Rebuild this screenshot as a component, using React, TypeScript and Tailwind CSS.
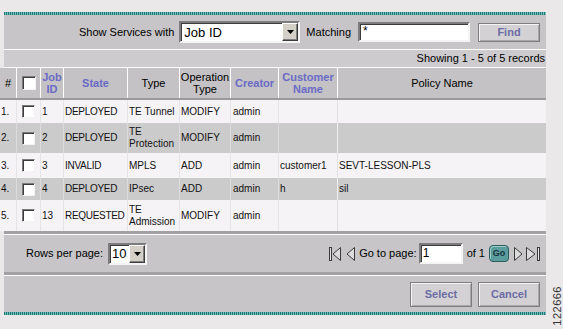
import React from "react";

type Row = {
  n: string;
  id: string;
  state: string;
  type: string[];
  op: string;
  creator: string;
  cust: string;
  policy: string;
  h: string;
  gray: boolean;
};

const rows: Row[] = [
  { n: "1.", id: "1", state: "DEPLOYED", type: ["TE Tunnel"], op: "MODIFY", creator: "admin", cust: "", policy: "", h: "h-[23px]", gray: false },
  { n: "2.", id: "2", state: "DEPLOYED", type: ["TE", "Protection"], op: "MODIFY", creator: "admin", cust: "", policy: "", h: "h-[30px]", gray: true },
  { n: "3.", id: "3", state: "INVALID", type: ["MPLS"], op: "ADD", creator: "admin", cust: "customer1", policy: "SEVT-LESSON-PLS", h: "h-[25px]", gray: false },
  { n: "4.", id: "4", state: "DEPLOYED", type: ["IPsec"], op: "ADD", creator: "admin", cust: "h", policy: "sil", h: "h-[22px]", gray: true },
  { n: "5.", id: "13", state: "REQUESTED", type: ["TE", "Admission"], op: "MODIFY", creator: "admin", cust: "", policy: "", h: "h-[31px]", gray: false },
];

const cols = "grid grid-cols-[16px_24px_23px_64px_52px_51px_48px_59px_209px]";

function Teal() {
  return <div className="h-[3px] w-full bg-[repeating-linear-gradient(90deg,#1b7a76_0px,#1b7a76_1px,#74bcb6_1px,#74bcb6_2px)]" />;
}

function Checkbox({ size = "w-[13px] h-[13px]" }: { size?: string }) {
  return (
    <div
      className={`${size} bg-white border border-t-[#7c7c7c] border-l-[#7c7c7c] border-b-[#f2f2f2] border-r-[#f2f2f2] shadow-[inset_1px_1px_0_#3c3c3c]`}
    />
  );
}

function DropArrow() {
  return (
    <div className="w-[16px] h-full bg-[#d4d0c8] border border-t-white border-l-white border-b-[#3c3c3c] border-r-[#3c3c3c] shadow-[inset_-1px_-1px_0_#808080] flex items-center justify-center">
      <svg width="7" height="4" viewBox="0 0 7 4">
        <polygon points="0,0 7,0 3.5,4" fill="#000" />
      </svg>
    </div>
  );
}

function Sunken({ className, children }: { className: string; children?: React.ReactNode }) {
  return (
    <div
      className={`${className} bg-white border-2 border-t-[#7c7c7c] border-l-[#7c7c7c] border-b-[#f4f4f4] border-r-[#f4f4f4] shadow-[inset_1px_1px_0_#3c3c3c]`}
    >
      {children}
    </div>
  );
}

function GrayButton({ label, className }: { label: string; className: string }) {
  return (
    <button
      className={`${className} bg-[#d3d1d3] border border-[#7e7e7e] shadow-[inset_1px_1px_0_#f4f4f4,inset_-1px_-1px_0_#a8a8a8] font-bold text-[11px] text-[#6c6ca6]`}
    >
      {label}
    </button>
  );
}

function FirstIcon() {
  return (
    <svg width="12" height="16" viewBox="0 0 12 16">
      <rect x="0.5" y="1.5" width="2" height="13" fill="#e6e6e6" stroke="#3a3a3a" />
      <polygon points="11.5,1.5 4,8 11.5,14.5" fill="#dcdcdc" stroke="#3a3a3a" />
    </svg>
  );
}

function PrevIcon() {
  return (
    <svg width="9" height="16" viewBox="0 0 9 16">
      <polygon points="8.5,1.5 1,8 8.5,14.5" fill="#dcdcdc" stroke="#3a3a3a" />
    </svg>
  );
}

function NextIcon() {
  return (
    <svg width="9" height="16" viewBox="0 0 9 16">
      <polygon points="0.5,1.5 8,8 0.5,14.5" fill="#dcdcdc" stroke="#3a3a3a" />
    </svg>
  );
}

function LastIcon() {
  return (
    <svg width="15" height="16" viewBox="0 0 15 16">
      <polygon points="0.5,1.5 9,8 0.5,14.5" fill="#dcdcdc" stroke="#3a3a3a" />
      <rect x="11.5" y="1.5" width="2" height="13" fill="#e6e6e6" stroke="#3a3a3a" />
    </svg>
  );
}

function HeadCell({ children, blue, first }: { children: React.ReactNode; blue?: boolean; first?: boolean }) {
  return (
    <div
      className={`flex items-center justify-center text-center leading-[12px] ${first ? "" : "border-l border-white"} ${
        blue ? "font-bold text-[#6a6ac6]" : "text-black"
      }`}
    >
      {children}
    </div>
  );
}

export default function App() {
  return (
    <div className="w-[563px] h-[329px] bg-[#ebe8ea] pt-[12px] flex overflow-hidden font-['Liberation_Sans',Arial,sans-serif] text-[11px] text-black">
      <div className="ml-[4px] w-[542px] flex flex-col">
        <Teal />

        {/* filter bar */}
        <div className="h-[34px] bg-[#c7c5c7] flex items-center justify-end pr-[6px]">
          <span>Show Services with</span>
          <div className="ml-[5px] w-[121px] h-[22px] flex bg-white border-2 border-t-[#7c7c7c] border-l-[#7c7c7c] border-b-[#f4f4f4] border-r-[#f4f4f4] shadow-[inset_1px_1px_0_#3c3c3c]">
            <span className="flex-1 pl-[3px] pt-[1px] text-[13px] leading-[17px]">Job ID</span>
            <DropArrow />
          </div>
          <span className="ml-[6px]">Matching</span>
          <Sunken className="ml-[7px] w-[112px] h-[20px] pl-[3px] text-[12px] leading-[15px]">*</Sunken>
          <GrayButton label="Find" className="ml-[8px] w-[62px] h-[19px]" />
        </div>
        <div className="h-px bg-white" />

        <div className="h-[17px] bg-[#cdcbcd] flex items-center justify-end pr-[1px]">
          Showing 1 - 5 of 5 records
        </div>
        <div className="h-px bg-white" />

        {/* table */}
        <div className="-ml-[4px] w-[546px]">
          <div className={`${cols} h-[30px] bg-[#c4c2c4]`}>
            <HeadCell first>#</HeadCell>
            <HeadCell>
              <Checkbox size="w-[14px] h-[14px]" />
            </HeadCell>
            <HeadCell blue>
              Job
              <br />
              ID
            </HeadCell>
            <HeadCell blue>State</HeadCell>
            <HeadCell>Type</HeadCell>
            <HeadCell>
              Operation
              <br />
              Type
            </HeadCell>
            <HeadCell blue>Creator</HeadCell>
            <HeadCell blue>
              Customer
              <br />
              Name
            </HeadCell>
            <HeadCell>Policy Name</HeadCell>
          </div>
          <div className="h-[2px] bg-[#9c9a9c]" />

          {rows.map((r) => {
            const line = r.gray ? "border-l border-[#dcdadc]" : "border-l border-[#e6e4e6]";
            return (
              <div
                key={r.n}
                className={`${cols} ${r.h} ${r.gray ? "bg-[#cccbcc]" : "bg-[#f5f3f5]"} text-[10px] leading-[12px] text-[#111]`}
              >
                <div className="flex items-center pl-[1px]">{r.n}</div>
                <div className={`flex items-center justify-center ${line}`}>
                  <Checkbox />
                </div>
                <div className={`flex items-center pl-[1px] ${line}`}>{r.id}</div>
                <div className={`flex items-center pl-[1px] tracking-[-0.3px] whitespace-nowrap ${line}`}>{r.state}</div>
                <div className={`flex flex-col justify-center pl-[1px] whitespace-nowrap ${line}`}>
                  {r.type.map((t) => (
                    <span key={t}>{t}</span>
                  ))}
                </div>
                <div className={`flex items-center pl-[1px] ${line}`}>{r.op}</div>
                <div className={`flex items-center pl-[2px] ${line}`}>{r.creator}</div>
                <div className={`flex items-center pl-[1px] ${line}`}>{r.cust}</div>
                <div className={`flex items-center pl-[1px] border-l ${r.gray ? "border-[#f0f0f0]" : "border-[#e2e0e2]"}`}>
                  {r.policy}
                </div>
              </div>
            );
          })}
        </div>

        <div className="h-[3px] bg-[#a2a0a2]" />
        <div className="h-px bg-white" />

        {/* pagination */}
        <div className="h-[37px] bg-[#c7c5c7] flex items-center pl-[22px] pr-[5px]">
          <span>Rows per page:</span>
          <div className="ml-[5px] w-[39px] h-[22px] flex bg-white border-2 border-t-[#7c7c7c] border-l-[#7c7c7c] border-b-[#f4f4f4] border-r-[#f4f4f4] shadow-[inset_1px_1px_0_#3c3c3c]">
            <span className="flex-1 pl-[2px] text-[13px] leading-[18px]">10</span>
            <DropArrow />
          </div>
          <div className="ml-auto flex items-center">
            <FirstIcon />
            <span className="ml-[5px]">
              <PrevIcon />
            </span>
            <span className="ml-[4px]">Go to page:</span>
            <Sunken className="ml-[2px] w-[44px] h-[21px] pl-[2px] text-[12px] leading-[16px]">1</Sunken>
            <span className="ml-[4px]">of 1</span>
            <div className="ml-[4px] w-[20px] h-[17px] rounded-[4px] bg-[#5b9c9c] border border-[#2c5c5e] shadow-[inset_1px_1px_0_#9fd0cc] flex items-center justify-center text-[9px] font-bold text-[#173640]">
              Go
            </div>
            <span className="ml-[5px]">
              <NextIcon />
            </span>
            <span className="ml-[3px]">
              <LastIcon />
            </span>
          </div>
        </div>

        <div className="h-[3px] bg-[#a2a0a2]" />
        <div className="h-px bg-white" />

        {/* buttons */}
        <div className="h-[36px] bg-[#c7c5c7] flex items-start justify-end pt-[6px] pr-[6px] gap-[6px]">
          <GrayButton label="Select" className="w-[62px] h-[25px]" />
          <GrayButton label="Cancel" className="w-[62px] h-[25px]" />
        </div>
        <Teal />
      </div>

      <div className="ml-[6px] flex flex-col justify-end pb-[3px]">
        <span className="[writing-mode:vertical-rl] rotate-180 text-[11px] leading-[10px] tracking-[0.5px] text-[#333]">
          122666
        </span>
      </div>
    </div>
  );
}
